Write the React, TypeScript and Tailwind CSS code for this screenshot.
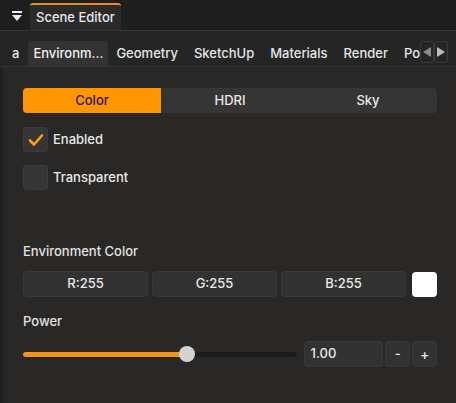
import React from "react";

const font = { fontFamily: "Inter, 'Noto Sans', sans-serif" };

function Check() {
  return (
    <svg width="18" height="18" viewBox="0 0 18 18">
      <path d="M3 9.5 L7 13.5 L15 4.5" fill="none" stroke="#ff9f1a" strokeWidth="2.6" strokeLinecap="round" strokeLinejoin="round" />
    </svg>
  );
}

export default function App() {
  const tabs = ["Geometry", "SketchUp", "Materials", "Render", "Po"];
  return (
    <div className="w-[456px] h-[403px] bg-[#1e1e1e] flex flex-col text-[#e6e6e6] overflow-hidden" style={font}>
      {/* title bar */}
      <div className="h-[31px] flex items-end border-b border-[#333]">
        <div className="w-[30px] h-full flex items-center justify-center pl-[4px] pt-[2px]">
          <svg width="12" height="12" viewBox="0 0 12 12">
            <rect x="1" y="1" width="10" height="2" fill="#eee" />
            <path d="M1 5 L11 5 L6 11 Z" fill="#eee" />
          </svg>
        </div>
        <div className="h-[27px] w-[91px] bg-[#2a2a2a] border-t-2 border-[#e8901d] rounded-t-[3px] flex items-center pl-[6px] text-[13px] font-medium text-[#e8e8e8]">
          Scene Editor
        </div>
      </div>
      {/* tab row */}
      <div className="h-[36px] bg-[#252525] flex items-end border-b border-[#343434] relative">
        <div className="flex items-center h-[25px] text-[13px] font-medium">
          <span className="pl-[12px] pr-[9px] text-[#e6e6e6]">a</span>
          <div className="h-[25px] w-[80px] bg-[#333] rounded-t-[4px] flex items-center justify-center text-[#f0f0f0]">
            Environm...
          </div>
          {tabs.map((t) => (
            <span key={t} className="px-[8px] text-[#e6e6e6] whitespace-nowrap">
              {t}
            </span>
          ))}
        </div>
        <div className="absolute right-[8px] top-[10px] flex">
          <div className="w-[14px] h-[22px] border border-[#3a3a3a] rounded-[3px] bg-[#252525] flex items-center justify-center">
            <svg width="10" height="12" viewBox="0 0 10 12"><path d="M9 1 L1 6 L9 11 Z" fill="#8a8a8a" /></svg>
          </div>
          <div className="w-[14px] h-[22px] border border-[#3a3a3a] rounded-[3px] bg-[#252525] flex items-center justify-center">
            <svg width="10" height="12" viewBox="0 0 10 12"><path d="M1 1 L9 6 L1 11 Z" fill="#bdbdbd" /></svg>
          </div>
        </div>
      </div>
      {/* content */}
      <div className="flex-1 bg-[#292827] border-l-[3px] border-[#1e1e1e] pl-[20px] pr-[19px] pt-[21px] text-[13px] font-medium">
        <div className="flex h-[25px] rounded-[4px] bg-[#363535] overflow-hidden">
          <div className="w-[138px] bg-[#ff9500] text-[#2a1a05] flex items-center justify-center">Color</div>
          <div className="w-[138px] flex items-center justify-center text-[#e8e8e8]">HDRI</div>
          <div className="flex-1 flex items-center justify-center text-[#e8e8e8]">Sky</div>
        </div>
        <div className="flex items-center mt-[14px] h-[25px]">
          <div className="w-[25px] h-[25px] rounded-[3px] bg-[#363535] border border-[#3c3b3b] flex items-center justify-center">
            <Check />
          </div>
          <span className="ml-[5px] text-[#e8e8e8]">Enabled</span>
        </div>
        <div className="flex items-center mt-[13px] h-[25px]">
          <div className="w-[25px] h-[25px] rounded-[3px] bg-[#363535] border border-[#3c3b3b]" />
          <span className="ml-[5px] text-[#e8e8e8]">Transparent</span>
        </div>
        <div className="mt-[54px] h-[16px] flex items-center text-[#e2e2e2]">Environment Color</div>
        <div className="flex mt-[11px] h-[26px] gap-[4px] items-center">
          {["R:255", "G:255", "B:255"].map((v) => (
            <div key={v} className="w-[125px] h-[26px] rounded-[4px] bg-[#333232] border border-[#3a3939] flex items-center justify-center text-[#e8e8e8]">
              {v}
            </div>
          ))}
          <div className="w-[25px] h-[25px] rounded-[4px] bg-white ml-[2px]" />
        </div>
        <div className="mt-[17px] h-[16px] flex items-center text-[#e2e2e2]">Power</div>
        <div className="flex items-center mt-[11px] h-[26px]">
          <div className="relative w-[275px] h-[16px] flex items-center">
            <div className="absolute left-0 right-0 h-[5px] rounded-full bg-[#1c1c1c]" />
            <div className="absolute left-0 w-[164px] h-[5px] rounded-full bg-[#f0951c]" />
            <div className="absolute left-[156px] w-[16px] h-[16px] rounded-full bg-[#d3d3d3]" />
          </div>
          <div className="ml-[7px] w-[80px] h-[26px] rounded-[4px] bg-[#333232] border border-[#3a3939] flex items-center pl-[6px] text-[#e8e8e8]">
            1.00
          </div>
          <div className="ml-[2px] w-[25px] h-[26px] rounded-[4px] bg-[#333232] border border-[#3a3939] flex items-center justify-center text-[#e8e8e8]">
            -
          </div>
          <div className="ml-[2px] w-[25px] h-[26px] rounded-[4px] bg-[#333232] border border-[#3a3939] flex items-center justify-center text-[#e8e8e8] text-[14px]">
            +
          </div>
        </div>
      </div>
    </div>
  );
}
